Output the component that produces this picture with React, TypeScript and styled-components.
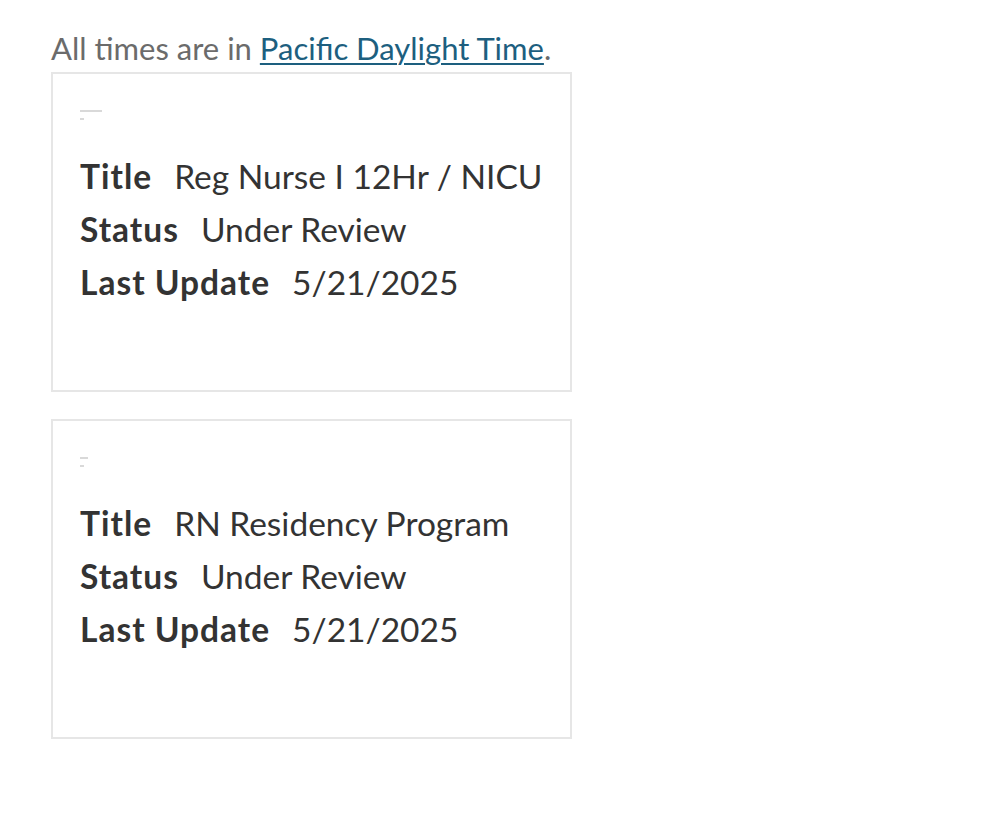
import styled, { createGlobalStyle } from "styled-components"

const GlobalStyle = createGlobalStyle`
    body {
        margin: 0;
        background: #ffffff;
        font-family: 'Lato', 'Open Sans', sans-serif;
    }
`

const Page = styled.div`
    padding: 28px 0 0 51px;
    width: 521px;
`

const Note = styled.p`
    margin: 0;
    font-size: 31px;
    line-height: 40px;
    color: #6b6b6b;
    white-space: nowrap;
`

const Link = styled.a`
    color: #1d5f7f;
    text-decoration: underline;
    text-underline-offset: 3px;
    text-decoration-thickness: 2px;
`

const List = styled.div`
    display: flex;
    flex-direction: column;
    gap: 27px;
    margin-top: 4px;
`

const Card = styled.div`
    box-sizing: border-box;
    height: 320px;
    border: 2px solid #e6e6e6;
    padding: 36px 20px 0 27px;
`

const Redacted = styled.div`
    display: flex;
    flex-direction: column;
    gap: 6px;
    height: 40px;
`

const Smudge = styled.span<{ w: number }>`
    display: block;
    width: ${props => props.w}px;
    height: 2px;
    background: #c9c9c9;
    opacity: 0.7;
`

const Row = styled.div`
    display: flex;
    align-items: baseline;
    font-size: 33.5px;
    line-height: 53px;
    color: #333333;
    white-space: nowrap;
`

const Label = styled.span`
    font-weight: 700;
    letter-spacing: 1px;
    margin-right: 22px;
`

const Value = styled.span`
    font-weight: 400;
`

interface Application {
    title: string;
    status: string;
    updated: string;
}

const apps: Application[] = [
    { title: "Reg Nurse I 12Hr / NICU", status: "Under Review", updated: "5/21/2025" },
    { title: "RN Residency Program", status: "Under Review", updated: "5/21/2025" },
]

const App = () => {
    return (
        <Page>
            <GlobalStyle />
            <Note>
                All times are in <Link href="#">Pacific Daylight Time</Link>.
            </Note>
            <List>
                {apps.map((app, i) => (
                    <Card key={i}>
                        <Redacted>
                            <Smudge w={i === 0 ? 22 : 8} />
                            <Smudge w={4} />
                        </Redacted>
                        <Row><Label>Title</Label><Value>{app.title}</Value></Row>
                        <Row><Label>Status</Label><Value>{app.status}</Value></Row>
                        <Row><Label>Last Update</Label><Value>{app.updated}</Value></Row>
                    </Card>
                ))}
            </List>
        </Page>
    )
}

export default App
